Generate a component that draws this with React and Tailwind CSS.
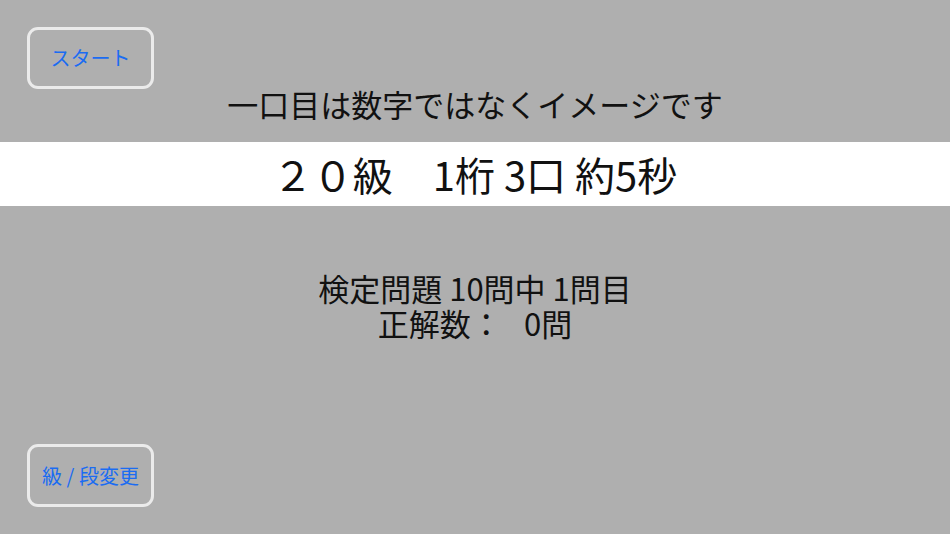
import React from "react";

const font = { fontFamily: '"Noto Sans CJK JP", "Noto Sans", sans-serif' };

export default function App() {
  return (
    <div
      className="w-[950px] h-[534px] bg-[#afafaf] flex flex-col overflow-hidden text-[#111]"
      style={font}
    >
      <div className="h-[142px] flex flex-col">
        <div className="pt-[27px] pl-[27px]">
          <button className="w-[127px] h-[62px] rounded-[11px] border-[3px] border-[#ebebeb] text-[20px] leading-none text-[#1b6cf2] flex items-center justify-center">
            スタート
          </button>
        </div>
        <div className="text-center text-[31px] leading-[30px]">
          一口目は数字ではなくイメージです
        </div>
      </div>
      <div className="h-[64px] bg-white flex items-center justify-center text-[40px] leading-none">
        ２０級　1桁 3口 約5秒
      </div>
      <div className="mt-[64px] text-center text-[31px] leading-[35px]">
        <div>検定問題 10問中 1問目</div>
        <div>{"正解数：\u2002 0問"}</div>
      </div>
      <div className="flex-1" />
      <div className="pl-[27px] pb-[27px]">
        <button className="w-[127px] h-[63px] rounded-[11px] border-[3px] border-[#ebebeb] text-[20px] leading-none text-[#1b6cf2] flex items-center justify-center">
          級 / 段変更
        </button>
      </div>
    </div>
  );
}
